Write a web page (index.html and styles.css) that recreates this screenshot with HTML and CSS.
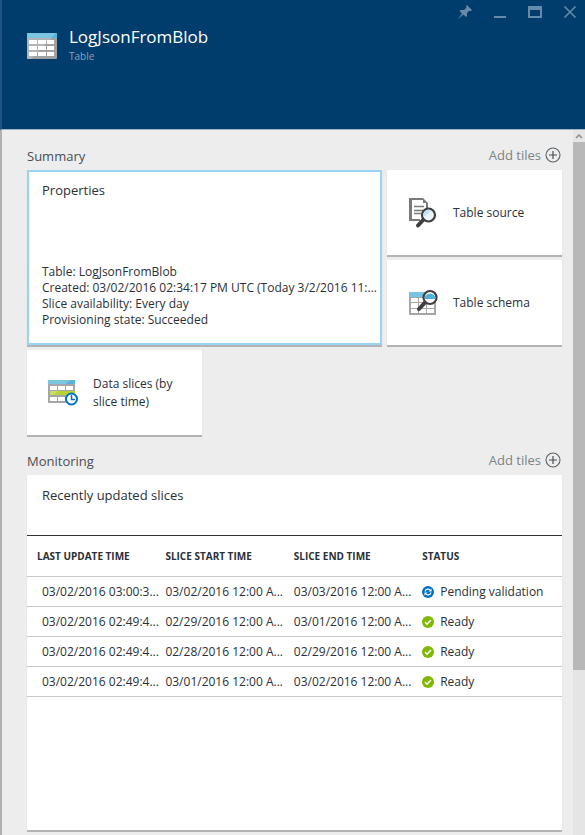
FILE: index.html
```html
<!DOCTYPE html>
<html lang="en">
<head>
<meta charset="utf-8">
<title>LogJsonFromBlob</title>
<link rel="stylesheet" href="styles.css">
</head>
<body>
<main class="blade">
  <header class="blade-header">
    <svg class="blade-icon" viewBox="0 0 30 26" aria-hidden="true">
      <rect y="0" width="30" height="26" rx="1" fill="#a0a1a2"/>
      <path d="M0 5h25L4 26H1q-1 0-1-1z" fill="#b3b4b5"/>
      <path d="M0 5V1q0-1 1-1h28q1 0 1 1v4z" fill="#59b4d9"/>
      <path d="M0 5V1q0-1 1-1h28l-5 5z" fill="#7bc4e2"/>
      <path d="M2 7h8v4H2zM11 7h8v4h-8zM20 7h7v4h-7zM2 13h8v4H2zM11 13h8v4h-8zM20 13h7v4h-7zM2 19h8v4H2zM11 19h8v4h-8zM20 19h7v4h-7z" fill="#fff"/>
    </svg>
    <div class="blade-heading">
      <h1 class="blade-title">LogJsonFromBlob</h1>
      <p class="blade-subtitle">Table</p>
    </div>
    <div class="window-controls">
      <button class="window-button" type="button" aria-label="Pin">
        <svg viewBox="0 0 14 14"><path d="M9 0l5 5-1 1-2 0-2 2 0 3-1 1-2.500-2.500L0 14l4-5.500L1.500 6l1-1 3.500 0 2.500-2.500L8 1z" fill="currentColor"/></svg>
      </button>
      <button class="window-button" type="button" aria-label="Minimize">
        <svg viewBox="0 0 14 14"><path d="M1 11h12v2H1z" fill="currentColor"/></svg>
      </button>
      <button class="window-button" type="button" aria-label="Maximize">
        <svg viewBox="0 0 14 14"><path d="M0 1h14v12H0zM2 5v6h10V5z" fill="currentColor" fill-rule="evenodd"/></svg>
      </button>
      <button class="window-button" type="button" aria-label="Close">
        <svg viewBox="0 0 14 14"><path d="M1.500 1.500l11 11M12.500 1.500l-11 11" stroke="currentColor" stroke-width="1.600"/></svg>
      </button>
    </div>
  </header>

  <div class="blade-body">
    <div class="content">
      <section class="lens">
        <div class="lens-header">
          <h2 class="lens-title">Summary</h2>
          <button class="add-tiles" type="button">Add tiles
            <svg viewBox="0 0 16 16" aria-hidden="true"><path d="M8 4v8M4 8h8" stroke="#464f57" stroke-width="1.200"/><circle cx="8" cy="8" r="7" fill="none" stroke="#5a6268" stroke-width="1.100"/></svg>
          </button>
        </div>
        <div class="tiles">
          <article class="tile tile-properties">
            <h3 class="tile-title">Properties</h3>
            <ul class="properties">
              <li>Table: LogJsonFromBlob</li>
              <li>Created: 03/02/2016 02:34:17 PM UTC (Today 3/2/2016 11:...</li>
              <li>Slice availability: Every day</li>
              <li>Provisioning state: Succeeded</li>
            </ul>
          </article>
          <a class="tile tile-link" href="#source">
            <svg class="tile-icon" viewBox="0 0 32 32" aria-hidden="true">
              <path d="M2 1h14v2H5v19h8v2H2z" fill="#7a7a7a"/>
              <path d="M16 1l5 5h-5zM19 6h2v6h-2z" fill="#7a7a7a"/>
              <path d="M7 9.500h10M7 13.500h9M7 16.500h7" stroke="#7a7a7a" stroke-width="1.300"/>
              <path d="M17 22l-6 6.500" stroke="#3e3e3e" stroke-width="4" stroke-linecap="round"/>
              <circle cx="21.500" cy="18" r="6.500" fill="#e9f6fc" stroke="#3e3e3e" stroke-width="2.200"/>
              <path d="M16.500 20a5.500 5.500 0 0 1 8-6.500z" fill="#c3e4f4"/>
            </svg>
            <span>Table source</span>
          </a>
          <a class="tile tile-link" href="#schema">
            <svg class="tile-icon" viewBox="0 0 32 32" aria-hidden="true">
              <path d="M2 5h27v23H2z" fill="#a5a6a7"/>
              <path d="M2 5h27v5H2z" fill="#76c3e3"/>
              <path d="M4 11h7v4H4zM12 11h7v4h-7zM20 11h7v4h-7zM4 16h7v5H4zM12 16h7v5h-7zM20 16h7v5h-7zM4 22h7v4H4zM12 22h7v4h-7zM20 22h7v4h-7z" fill="#fff"/>
              <path d="M18.500 15l-6.500 7" stroke="#3e3e3e" stroke-width="4" stroke-linecap="round"/>
              <circle cx="23" cy="10.500" r="6.500" fill="#fff" stroke="#3e3e3e" stroke-width="2.200"/>
              <path d="M17.500 12a5.500 5.500 0 1 1 11 0z" fill="#4fb1da"/>
            </svg>
            <span>Table schema</span>
          </a>
          <a class="tile tile-link" href="#slices">
            <svg class="tile-icon" viewBox="0 0 32 32" aria-hidden="true">
              <path d="M1 3h27v23H1z" fill="#a5a6a7"/>
              <path d="M1 3h27v4H1z" fill="#59b4d9"/>
              <path d="M1 3h22l-4 4H1z" fill="#7bc4e2"/>
              <path d="M3 9h7v4H3zM11 9h7v4h-7zM19 9h7v4h-7zM3 20h7v4H3zM11 20h7v4h-7z" fill="#fff"/>
              <path d="M3 14h25v4H3z" fill="#b8d432"/>
              <path d="M3 14h8l-4 4H3z" fill="#c8de62"/>
              <circle cx="24.500" cy="22" r="5.500" fill="#fff" stroke="#0072c6" stroke-width="2"/>
              <path d="M24.500 18v4.500H28" fill="none" stroke="#0072c6" stroke-width="1.500"/>
            </svg>
            <span>Data slices (by slice time)</span>
          </a>
        </div>
      </section>

      <section class="lens">
        <div class="lens-header">
          <h2 class="lens-title">Monitoring</h2>
          <button class="add-tiles" type="button">Add tiles
            <svg viewBox="0 0 16 16" aria-hidden="true"><path d="M8 4v8M4 8h8" stroke="#464f57" stroke-width="1.200"/><circle cx="8" cy="8" r="7" fill="none" stroke="#5a6268" stroke-width="1.100"/></svg>
          </button>
        </div>
        <article class="tile tile-slices">
          <h3 class="tile-title">Recently updated slices</h3>
          <table class="slices">
            <thead>
              <tr><th scope="col">LAST UPDATE TIME</th><th scope="col">SLICE START TIME</th><th scope="col">SLICE END TIME</th><th class="status-column" scope="col">STATUS</th></tr>
            </thead>
            <tbody>
              <tr>
                <td>03/02/2016 03:00:3...</td><td>03/02/2016 12:00 A...</td><td>03/03/2016 12:00 A...</td>
                <td><span class="status"><svg viewBox="0 0 12 12" aria-hidden="true"><circle cx="6" cy="6" r="6" fill="#0072c6"/><path d="M3 5.500A3 3 0 0 1 8.500 4.500M9 6.500A3 3 0 0 1 3.500 7.500" fill="none" stroke="#fff" stroke-width="1.300"/><path d="M9.500 2.500v3h-3zM2.500 9.500v-3h3z" fill="#fff"/></svg>Pending validation</span></td>
              </tr>
              <tr>
                <td>03/02/2016 02:49:4...</td><td>02/29/2016 12:00 A...</td><td>03/01/2016 12:00 A...</td>
                <td><span class="status"><svg viewBox="0 0 12 12" aria-hidden="true"><circle cx="6" cy="6" r="6" fill="#7fba00"/><path d="M3 6l2 2.200L9 4" fill="none" stroke="#fff" stroke-width="1.500"/></svg>Ready</span></td>
              </tr>
              <tr>
                <td>03/02/2016 02:49:4...</td><td>02/28/2016 12:00 A...</td><td>02/29/2016 12:00 A...</td>
                <td><span class="status"><svg viewBox="0 0 12 12" aria-hidden="true"><circle cx="6" cy="6" r="6" fill="#7fba00"/><path d="M3 6l2 2.200L9 4" fill="none" stroke="#fff" stroke-width="1.500"/></svg>Ready</span></td>
              </tr>
              <tr>
                <td>03/02/2016 02:49:4...</td><td>03/01/2016 12:00 A...</td><td>03/02/2016 12:00 A...</td>
                <td><span class="status"><svg viewBox="0 0 12 12" aria-hidden="true"><circle cx="6" cy="6" r="6" fill="#7fba00"/><path d="M3 6l2 2.200L9 4" fill="none" stroke="#fff" stroke-width="1.500"/></svg>Ready</span></td>
              </tr>
            </tbody>
          </table>
        </article>
      </section>
    </div>
    <div class="scrollbar" aria-hidden="true">
      <svg class="scroll-up" viewBox="0 0 12 12"><path d="M3 8l3-3 3 3" fill="none" stroke="#8c8c8c" stroke-width="1.500"/></svg>
      <div class="scroll-thumb"></div>
      <div class="scroll-track"></div>
    </div>
  </div>
</main>
</body>
</html>
```

FILE: styles.css
```css
* {
  box-sizing: border-box;
}

body {
  margin: 0;
  background: #ededed;
  color: #2b2f38;
  font: 12px/16px "Open Sans", "Noto Sans", sans-serif;
}

h1, h2, h3, p, ul {
  margin: 0;
  padding: 0;
  font-weight: 400;
}

button {
  padding: 0;
  border: 0;
  background: none;
  font: inherit;
}

svg {
  display: block;
  flex: none;
}

.blade {
  display: flex;
  flex-direction: column;
  min-height: 100vh;
}

.blade-header {
  display: flex;
  align-items: flex-start;
  height: 130px;
  padding-left: 25px;
  border-left: 2px solid #1f5380;
  border-bottom: 1px solid #9fb3c5;
  background: #003c6c;
  color: #fff;
}

.blade-icon {
  width: 30px;
  height: 26px;
  margin-top: 33px;
}

.blade-heading {
  flex: 1;
  margin: 25px 0 0 12px;
}

.blade-title {
  font-size: 17px;
  line-height: 24px;
}

.blade-subtitle {
  color: #8aa4bc;
  font-size: 10px;
  line-height: 14px;
}

.window-controls {
  display: flex;
  gap: 21px;
  padding: 5px 8px 0 0;
}

.window-button {
  width: 14px;
  height: 14px;
  color: #668aa8;
}

.blade-body {
  display: flex;
  flex: 1;
  border-left: 2px solid #b1b1b1;
}

.content {
  flex: 1;
  min-width: 0;
  padding: 15px 11px 5px 25px;
}

.lens + .lens {
  margin-top: 15px;
}

.lens-header {
  display: flex;
  align-items: flex-start;
  justify-content: space-between;
  height: 25px;
}

.lens-title {
  color: #4a4e55;
  font-size: 13px;
  line-height: 22px;
}

.add-tiles {
  display: flex;
  align-items: center;
  gap: 4px;
  padding-right: 1px;
  color: #7c8385;
  font-size: 13px;
  line-height: 20px;
}

.add-tiles svg {
  width: 16px;
  height: 16px;
}

.tiles {
  display: grid;
  grid-template-columns: repeat(3, 1fr);
  grid-auto-rows: 85px;
  gap: 5px;
}

.tile {
  background: #fff;
  box-shadow: 0 2px 0 #b3b3b3, 0 1px 1px #d0d0d0;
}

.tile-title {
  font-size: 13px;
  line-height: 20px;
}

.tile-properties {
  display: flex;
  flex-direction: column;
  justify-content: space-between;
  grid-column: span 2;
  grid-row: span 2;
  padding: 8px 13px 15px;
  border: 2px solid #99d4f5;
}

.properties {
  list-style: none;
  white-space: nowrap;
}

.tile-link {
  display: flex;
  align-items: center;
  gap: 14px;
  padding: 0 20px;
  color: inherit;
  line-height: 18px;
  text-decoration: none;
}

.tile-icon {
  width: 32px;
  height: 32px;
}

.tile-slices {
  min-height: 355px;
}

.tile-slices .tile-title {
  height: 60px;
  padding: 10px 15px 0;
}

.slices {
  width: 100%;
  border-top: 1px solid #333;
  border-spacing: 0;
  table-layout: fixed;
  white-space: nowrap;
}

.slices th,
.slices td {
  height: 30px;
  padding: 0 0 0 10px;
  border-bottom: 1px solid #c8c8c8;
  text-align: left;
}

.slices th {
  width: 24%;
  height: 41px;
  font-size: 10px;
  font-weight: 700;
}

.slices .status-column {
  width: 28%;
}

.slices td:first-child {
  padding-left: 15px;
}

.status {
  display: flex;
  align-items: center;
  gap: 6px;
}

.status svg {
  width: 12px;
  height: 12px;
}

.scrollbar {
  display: flex;
  flex-direction: column;
  width: 12px;
  background: #e5e5e5;
}

.scroll-up {
  width: 12px;
  height: 12px;
}

.scroll-thumb {
  flex: 528;
  background: #b8b8b8;
}

.scroll-track {
  flex: 165;
}
```
